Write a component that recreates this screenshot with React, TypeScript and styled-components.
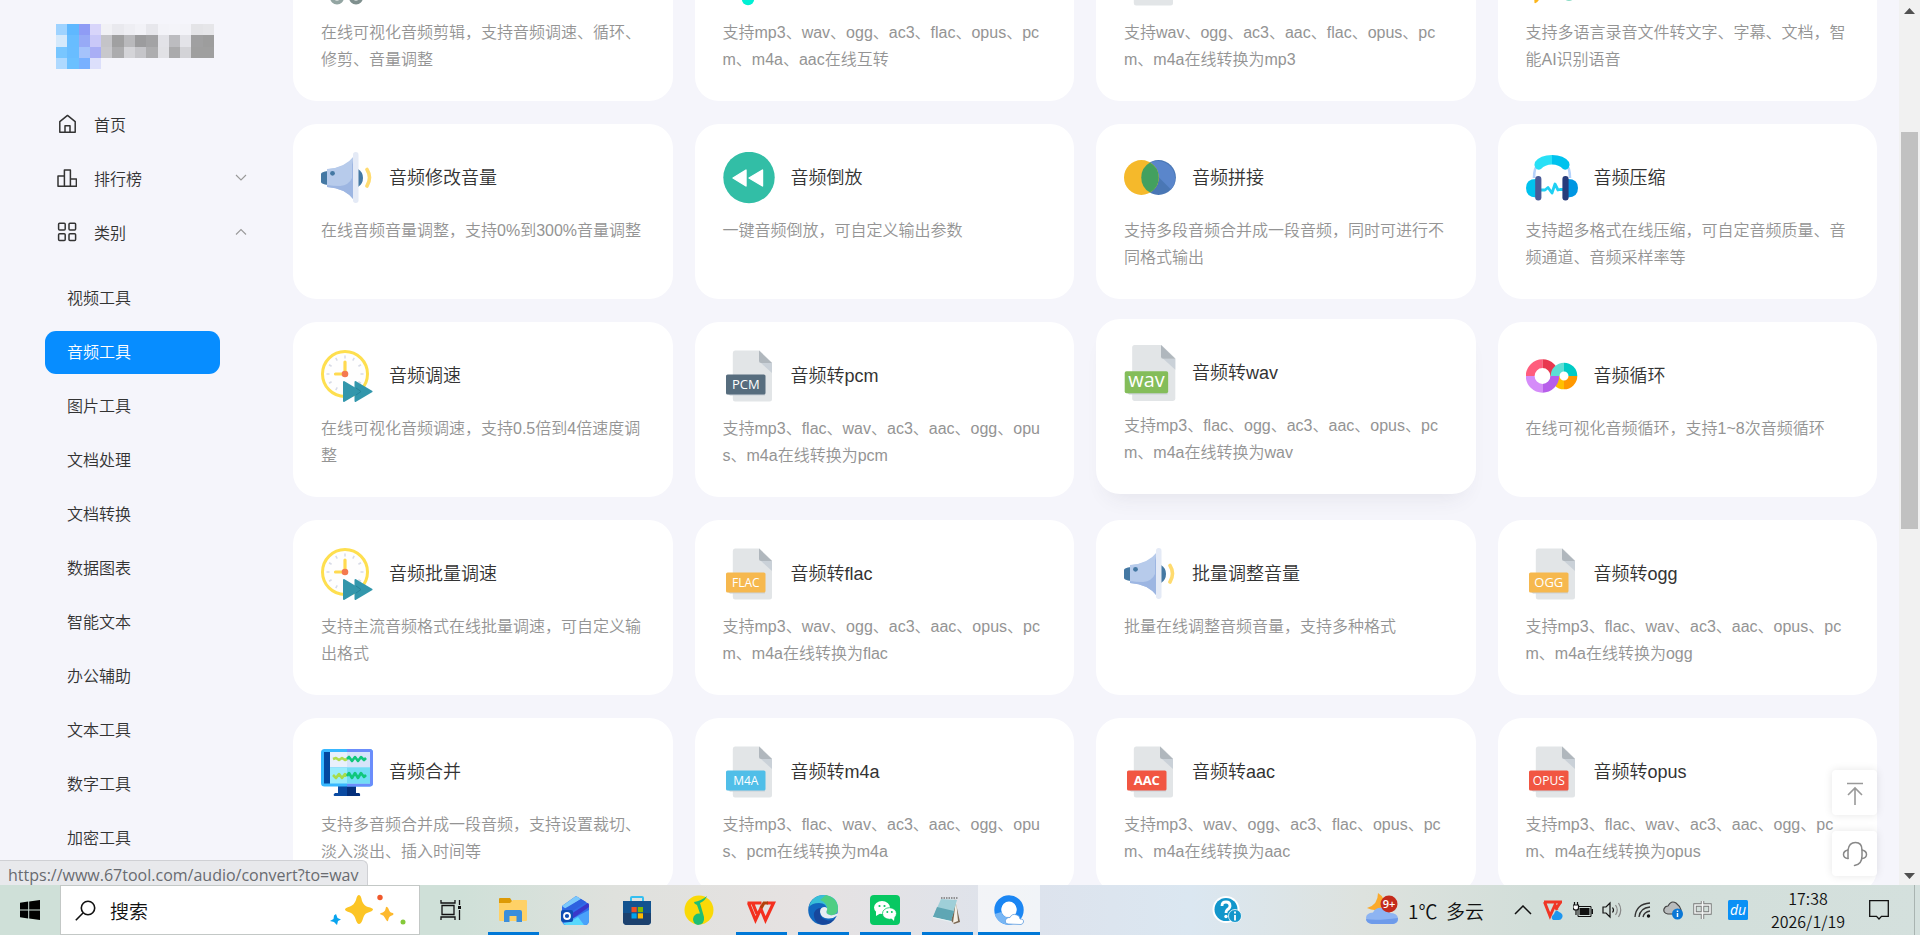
import React from "react";
import styled, { createGlobalStyle, css } from "styled-components";

const GlobalStyle = createGlobalStyle`
  * {
    box-sizing: border-box;
  }

  body {
    margin: 0;
    font-family: "Liberation Sans", "Noto Sans CJK SC", sans-serif;
    font-weight: 350;
    color: #333333;
  }

  button {
    border: 0;
    padding: 0;
    background: none;
    color: inherit;
    font: inherit;
    cursor: pointer;
  }

  a {
    color: inherit;
    text-decoration: none;
  }

  svg {
    display: block;
    flex-shrink: 0;
  }
`;

const Screen = styled("div")`
  height: 100vh;
  display: flex;
  flex-direction: column;
  overflow: hidden;
`;

const Viewport = styled("div")`
  position: relative;
  flex: 1;
  min-height: 0;
  display: flex;
  overflow: hidden;
  background-color: #f5f5fb;
`;

const Sidebar = styled("aside")`
  width: 293px;
  flex-shrink: 0;
  padding: 24px 46px 0 45px;
  overflow: hidden;
`;

const LogoLink = styled("a")`
  display: block;
  height: 73px;
  padding-left: 11px;
`;

const NavButton = styled("button")`
  width: 100%;
  height: 54px;
  padding-left: 12px;
  display: flex;
  align-items: center;
  gap: 17px;
  font-size: 16px;
  text-align: left;

  span {
    flex: 1;
  }
`;

const SubNav = styled("nav")`
  width: 175px;
  margin-top: 18px;
  display: flex;
  flex-direction: column;
  gap: 11px;
`;

const SubNavLink = styled("a")<{ $active?: boolean }>`
  height: 43px;
  flex-shrink: 0;
  padding-left: 22px;
  border-radius: 11px;
  font-size: 16px;
  line-height: 43px;

  ${({ $active }) =>
    $active &&
    css`
      background-color: #078dff;
      color: #ffffff;
    `}
`;

const Content = styled("main")`
  flex: 1;
  min-width: 0;
  margin-top: -74px;
  padding-right: 22px;
`;

const CardGrid = styled("div")`
  display: grid;
  grid-template-columns: repeat(4, 1fr);
  gap: 23px 22px;
`;

const Card = styled("a")<{ $hovered?: boolean }>`
  min-height: 175px;
  padding: 28px;
  border-radius: 24px;
  background-color: #ffffff;

  ${({ $hovered }) =>
    $hovered &&
    css`
      transform: translateY(-3px);
      box-shadow: 0 14px 22px -12px rgba(60, 60, 80, 0.1);

      svg {
        transform: scale(1.1);
      }
    `}
`;

const CardHead = styled("div")`
  display: flex;
  align-items: center;
  gap: 16px;
`;

const CardTitle = styled("h2")`
  margin: 0;
  font-size: 18px;
  line-height: 26px;
  font-weight: 350;
`;

const CardText = styled("p")`
  margin: 13px 0 0;
  color: #949494;
  font-size: 16px;
  line-height: 27px;
  word-break: break-all;
`;

const Scrollbar = styled("div")`
  width: 21px;
  flex-shrink: 0;
  padding: 7px 0 5px;
  display: flex;
  flex-direction: column;
  align-items: center;
  background-color: #f1f1f1;
`;

const ScrollTrack = styled("div")`
  flex: 1;
  width: 17px;
  padding: 117px 0 343px;
`;

const ScrollThumb = styled("div")`
  height: 100%;
  background-color: #c1c1c1;
`;

const FloatTools = styled("div")`
  position: absolute;
  right: 43px;
  bottom: 9px;
  display: flex;
  flex-direction: column;
  gap: 16px;
`;

const FloatButton = styled("button")`
  width: 45px;
  height: 45px;
  display: flex;
  align-items: center;
  justify-content: center;
  border-radius: 4px;
  background-color: #ffffff;
  box-shadow: 0 0 8px rgba(0, 0, 0, 0.1);
`;

const LinkStatus = styled("div")`
  position: absolute;
  left: 0;
  bottom: 0;
  height: 25px;
  padding: 0 9px 0 8px;
  border: 1px solid #cfd0d4;
  border-width: 1px 1px 0 0;
  border-radius: 0 6px 0 0;
  background-color: #e8e9ec;
  color: #686b70;
  font-family: "Open Sans", "Noto Sans", sans-serif;
  font-size: 16px;
  line-height: 28px;
  font-weight: 400;
`;

const Taskbar = styled("footer")`
  height: 50px;
  flex-shrink: 0;
  display: flex;
  align-items: center;
  background: linear-gradient(
    90deg,
    #cfe0d8 0%,
    #cfe0d8 24%,
    #dfe1dd 32%,
    #e6e2e2 42%,
    #dde3ed 54%,
    #dbe7f1 62%,
    #dde2de 71%,
    #d2ded9 80%,
    #d4e0dd 100%
  );
  color: #111111;
  font-family: "Noto Sans CJK SC", sans-serif;
`;

const StartButton = styled("button")`
  width: 60px;
  height: 50px;
  display: flex;
  align-items: center;
  justify-content: center;
`;

const SearchBox = styled("label")`
  width: 360px;
  height: 50px;
  padding: 0 13px 0 14px;
  display: flex;
  align-items: center;
  gap: 14px;
  border: 1px solid #c3c8c6;
  background-color: #ffffff;

  input {
    flex: 1;
    min-width: 0;
    padding: 0;
    border: 0;
    outline: 0;
    background: none;
    font: inherit;
    font-size: 19px;
  }

  input::placeholder {
    color: #111111;
    opacity: 1;
  }
`;

const AppButton = styled("button")<{ $state?: "running" | "focused" }>`
  width: 62px;
  height: 50px;
  display: flex;
  align-items: center;
  justify-content: center;
  position: relative;
  background-color: ${({ $state }) => ($state === "focused" ? "rgba(255, 255, 255, 0.6)" : "transparent")};

  ${({ $state }) =>
    $state &&
    css`
      &::after {
        content: "";
        position: absolute;
        bottom: 0;
        left: ${$state === "focused" ? "0" : "6px"};
        right: ${$state === "focused" ? "0" : "5px"};
        height: 3px;
        background-color: #0078d7;
      }
    `}
`;

const HelpButton = styled("button")`
  margin-left: auto;
  margin-right: 124px;
`;

const Weather = styled("button")`
  display: flex;
  align-items: center;
  gap: 10px;
  font-size: 19px;
`;

const Tray = styled("div")`
  margin-left: 28px;
  margin-right: 15px;
  display: flex;
  align-items: center;
  gap: 9px;

  button {
    width: 21px;
    height: 30px;
    display: flex;
    align-items: center;
    justify-content: center;
  }
`;

const Clock = styled("button")`
  width: 96px;
  margin-left: 12px;
  text-align: center;
  font-size: 16px;
  line-height: 23px;

  span {
    display: block;
  }
`;

const NoticeButton = styled("button")`
  height: 50px;
  padding: 0 25px 0 13px;
  border-right: 1px solid #a9b4b1;
  margin-right: 5px;
`;

/* Sidebar icons */

const mosaic: [number, string[]][] = [
  [0, ["#9fd3ff", "#5fb8ff", "#8f9cf5", "#d8d5fa", "#f1f1f5", "#e9e9ee", "#eeeef3", "#f2f2f7", "#e7e7ec", "#f3f3f8", "#f4f4f9", "#f3f3f8", "#e4e4e7", "#e6e6e9"]],
  [1, ["#d5e9fb", "#68bdff", "#97aaf6", "#c9c8f8", "#c4c4c8", "#a0a0a1", "#b9b9bc", "#9c9c9e", "#a3a3a5", "#e2e2e7", "#bcbcc0", "#e3e3e8", "#a0a0a1", "#9d9d9d"]],
  [2, ["#78c6ff", "#69bdff", "#a5c3fb", "#a9aef5", "#c8c8cc", "#acacae", "#d4d4d8", "#c5c5c9", "#adadaf", "#e1e1e5", "#aaaaac", "#d3d3d7", "#9f9f9f", "#9f9f9f"]],
  [3, ["#aed9ff", "#6bc0ff", "#78b0ff", "#dcdffb"]],
];

const SiteLogo = () => (
  <svg width="158" height="45" viewBox="0 0 14 4" preserveAspectRatio="none" shapeRendering="crispEdges">
    {mosaic.map(([row, cells]) =>
      cells.map((fill, col) => <rect key={`${row}-${col}`} x={col} y={row} width="1" height="1" fill={fill} />)
    )}
  </svg>
);

const lineProps = { fill: "none", stroke: "#333", strokeWidth: 1.5, strokeLinejoin: "round" as const };

const HomeIcon = () => (
  <svg width="20" height="20" viewBox="0 0 20 20" {...lineProps}>
    <path d="M2.8 7.6V18.2H18.2V7.6L10.5 1.4Z" />
    <path d="M8 18V11.8H13V18" />
  </svg>
);

const RankIcon = () => (
  <svg width="20" height="20" viewBox="0 0 20 20" {...lineProps}>
    <path d="M1 18.2V8H7.4V18.2ZM7.4 18.2V2H13.4V18.2ZM13.4 18.2V11H19.4V18.2Z" />
  </svg>
);

const CategoryIcon = () => (
  <svg width="20" height="20" viewBox="0 0 20 20" {...lineProps}>
    <rect x="1.6" y="1.3" width="6.6" height="6.6" rx="1" />
    <rect x="12" y="1.3" width="6.6" height="6.6" rx="1" />
    <rect x="1.6" y="11.8" width="6.6" height="6.6" rx="1" />
    <rect x="12" y="11.8" width="6.6" height="6.6" rx="1" />
  </svg>
);

const Chevron = ({ up }: { up?: boolean }) => (
  <svg width="12" height="8" viewBox="0 0 12 8" fill="none" stroke="#999" strokeWidth="1.1">
    <path d={up ? "M1 6.5L6 1.5L11 6.5" : "M1 1L6 6L11 1"} />
  </svg>
);

/* Tool icons, all drawn on a 52 x 52 board */

const Board = ({ children }: { children: React.ReactNode }) => (
  <svg width="52" height="52" viewBox="0 0 52 52">
    {children}
  </svg>
);

interface FileIconProps {
  label: string;
  color: string;
  size?: number;
  weight?: number;
}

const FileIcon = ({ label, color, size = 12, weight = 400 }: FileIconProps) => (
  <Board>
    <path d="M12 .5H36.5L49 12.5V49Q49 51.5 46.5 51.5H12Q9.8 51.5 9.8 49V3Q9.8 .5 12 .5Z" fill="#e2e5e7" />
    <path d="M38 13L49 23V13Z" fill="#cad1d8" />
    <path d="M36 .5L49 13H38Q36 13 36 11Z" fill="#b0b7bd" />
    <path d="M5 44H42V45.5H7Z" fill="#cad1d8" />
    <rect x="3" y="24.5" width="39.5" height="20" rx="1.6" fill={color} />
    <text
      x="22.8"
      y="39"
      fill="#fff"
      fontFamily="Open Sans, sans-serif"
      fontSize={size}
      fontWeight={weight}
      textAnchor="middle">
      {label}
    </text>
  </Board>
);

const SpeakerIcon = () => (
  <Board>
    <path d="M0 22Q0 20 7 19V33Q0 32 0 30Z" fill="#4478a3" />
    <path d="M37 17Q42 20 42 26T37 35Z" fill="#4478a3" />
    <path d="M6 17Q24 16 33 4V48Q24 36 6 35Z" fill="#b7cbeb" />
    <path d="M33 4V48Q24 36 6 35V33Q22 33 27 26Q30 18 33 4Z" fill="#9db6e2" />
    <path d="M8 17Q22 16 31 8V26Q28 33 19 34Q12 34 6 33V17Z" fill="#b7cbeb" />
    <circle cx="11.5" cy="21.3" r="2.4" fill="#4478a3" />
    <rect x="32" y="0" width="5.5" height="51" rx="2.7" fill="#e4eaf6" />
    <path d="M46 17.5Q51 25.5 46 34" fill="none" stroke="#ffdb6f" strokeWidth="3.6" strokeLinecap="round" />
  </Board>
);

const RewindIcon = () => (
  <Board>
    <circle cx="26" cy="25.5" r="25.7" fill="#32bea6" />
    <path d="M10 26L23 18V34ZM26 26L39.5 18V34Z" fill="#fff" stroke="#fff" strokeWidth="1.4" strokeLinejoin="round" />
  </Board>
);

const JoinIcon = () => (
  <Board>
    <circle cx="34.5" cy="25.5" r="17.4" fill="#4a77b5" />
    <path d="M22.5 13A17.4 17.4 0 0 1 47 37.500Z" fill="#5a86cb" />
    <circle cx="17.4" cy="25.5" r="17.4" fill="#f5b92b" />
    <path d="M26 10.4A17.4 17.4 0 0 1 26 40.6A17.4 17.4 0 0 1 26 10.4Z" fill="#43a05f" />
  </Board>
);

const HeadphoneIcon = () => (
  <Board>
    <path d="M8 26Q8 6 26 6T44 26" fill="none" stroke="#b5d2fb" strokeWidth="2.6" />
    <path d="M9 10Q14 3 26 3V12.5Q19 12.500 15 17Q12 19 9.500 16Q7.500 13 9 10Z" fill="#28e0f6" />
    <path d="M43 10Q38 3 26 3V12.5Q33 12.500 37 17Q40 19 42.500 16Q44.500 13 43 10Z" fill="#00c2ee" />
    <path d="M10 27Q0 27 0 36T10 45.5Z" fill="#00c2ee" />
    <path d="M42 27Q52 27 52 36T42 45.5Z" fill="#0096e2" />
    <path d="M15 38H19L22 35.5L26 41L29 32L32 38L34 37.5H37" fill="none" stroke="#1fd0f3" strokeWidth="2.8" strokeLinejoin="round" />
    <rect x="9.2" y="24" width="6.2" height="24.5" rx="3" fill="#4a5a97" />
    <rect x="36.4" y="24" width="6.2" height="24.5" rx="3" fill="#273b7a" />
  </Board>
);

const ClockIcon = () => (
  <Board>
    <circle cx="24" cy="24" r="22.5" fill="#fefefe" stroke="#fedf4f" strokeWidth="3" />
    {[0, 30, 60, 90, 120, 150, 180, 210, 240, 270, 300, 330].map((angle) => (
      <path key={angle} d="M24 5.5V8.5" stroke="#d8dbe6" strokeWidth="1.5" transform={`rotate(${angle} 24 24)`} />
    ))}
    <path d="M24 12V24H14.5" fill="none" stroke="#ffda50" strokeWidth="3.2" strokeLinecap="round" />
    <circle cx="24" cy="24" r="3.3" fill="#f4794f" />
    <path d="M34.5 32L50.5 41.5L34.5 51Z" fill="#3397ac" stroke="#3397ac" strokeWidth="2" strokeLinejoin="round" />
    <path d="M23 32L39 41.5L23 51Z" fill="#3397ac" stroke="#3397ac" strokeWidth="2" strokeLinejoin="round" />
    <path d="M35 38L40 41.5L35 45" fill="none" stroke="#26849a" strokeWidth="1" />
  </Board>
);

const LoopIcon = () => (
  <Board>
    <g fill="none" strokeWidth="8.8">
      <path d="M38 34.9A8.9 8.9 0 0 1 29.1 26" stroke="#ffbf00" />
      <path d="M38 34.9A8.9 8.9 0 0 0 46.9 26" stroke="#ff9800" />
      <path d="M4.2 26A12.3 12.3 0 0 1 16.5 13.7" stroke="#ff5d7d" />
      <path d="M16.5 13.7A12.3 12.3 0 0 1 28.8 26" stroke="#e8384f" />
      <path d="M29.1 26A8.9 8.9 0 0 1 38 17.1" stroke="#5ddfd5" />
      <path d="M38 17.1A8.9 8.9 0 0 1 46.9 26" stroke="#00cbc5" />
      <path d="M4.2 26A12.3 12.3 0 0 0 16.5 38.3" stroke="#d58cf9" />
      <path d="M16.5 38.3A12.3 12.3 0 0 0 28.8 26" stroke="#b75eea" />
    </g>
  </Board>
);

const MonitorIcon = () => (
  <Board>
    <path d="M17 38H35V47H38Q40 49 38.5 50H13.5Q11.5 49 14 47H17Z" fill="#0a4aa2" />
    <path d="M26 38H35V47H38Q40 49 38.5 50H26Z" fill="#04307c" />
    <rect x="0" y="3" width="52" height="37.5" rx="3.5" fill="#38b8ff" />
    <path d="M26 3H48.5Q52 3 52 6.5V37Q52 40.5 48.5 40.5H26Z" fill="#6b8dfb" />
    <rect x="3" y="6" width="6" height="31.5" fill="#0348a0" />
    <rect x="9" y="6" width="40" height="15.5" fill="#e9f0fb" />
    <rect x="26" y="6" width="23" height="15.5" fill="#d6e4fa" />
    <rect x="9" y="21.5" width="40" height="16" fill="#99ecfc" />
    <rect x="26" y="21.5" width="23" height="16" fill="#72ddf5" />
    <g fill="none" strokeWidth="2.6" strokeLinejoin="round">
      <path d="M12 13L15 12L18 14L21 12L24 14L26 13" stroke="#b0dc4c" />
      <path d="M26 13L28 11L31 15L34 11L37 15L40 11L43 14L45 12" stroke="#10c77b" />
      <path d="M12 29L15 32L18 28L21 32L24 28L26 30" stroke="#a6dc4c" />
      <path d="M26 30L28 27L31 32L34 27L37 32L40 27L43 31L45 29" stroke="#10c77b" />
    </g>
  </Board>
);

const ScissorsIcon = () => (
  <Board>
    <path d="M12 2L32 36M40 2L20 36" stroke="#c8d2d2" strokeWidth="5" />
    <circle cx="16" cy="43.5" r="5" fill="none" stroke="#93a5a2" strokeWidth="4" />
    <circle cx="35" cy="43.5" r="5" fill="none" stroke="#7f908e" strokeWidth="4" />
  </Board>
);

const NoteIcon = () => (
  <Board>
    <path d="M26 4V44M26 4L42 10" fill="none" stroke="#00e9d0" strokeWidth="5" />
    <circle cx="25" cy="45" r="6.2" fill="#00f0d4" />
  </Board>
);

const SpeechIcon = () => (
  <Board>
    <path d="M6 8H22L14 44Q11 50 8.5 49L8 42Z" fill="#fbb51b" />
    <circle cx="43" cy="41" r="6" fill="#8cdcc6" />
  </Board>
);

interface Tool {
  title: string;
  text: string;
  icon: React.ReactNode;
  hovered?: boolean;
}

const tools: Tool[] = [
  { title: "音频剪辑", text: "在线可视化音频剪辑，支持音频调速、循环、修剪、音量调整", icon: <ScissorsIcon /> },
  { title: "音频转换", text: "支持mp3、wav、ogg、ac3、flac、opus、pcm、m4a、aac在线互转", icon: <NoteIcon /> },
  { title: "音频转mp3", text: "支持wav、ogg、ac3、aac、flac、opus、pcm、m4a在线转换为mp3", icon: <FileIcon label="MP3" color="#50bee8" /> },
  { title: "录音转文字", text: "支持多语言录音文件转文字、字幕、文档，智能AI识别语音", icon: <SpeechIcon /> },
  { title: "音频修改音量", text: "在线音频音量调整，支持0%到300%音量调整", icon: <SpeakerIcon /> },
  { title: "音频倒放", text: "一键音频倒放，可自定义输出参数", icon: <RewindIcon /> },
  { title: "音频拼接", text: "支持多段音频合并成一段音频，同时可进行不同格式输出", icon: <JoinIcon /> },
  { title: "音频压缩", text: "支持超多格式在线压缩，可自定音频质量、音频通道、音频采样率等", icon: <HeadphoneIcon /> },
  { title: "音频调速", text: "在线可视化音频调速，支持0.5倍到4倍速度调整", icon: <ClockIcon /> },
  { title: "音频转pcm", text: "支持mp3、flac、wav、ac3、aac、ogg、opus、m4a在线转换为pcm", icon: <FileIcon label="PCM" color="#576d7e" size={13} /> },
  {
    title: "音频转wav",
    text: "支持mp3、flac、ogg、ac3、aac、opus、pcm、m4a在线转换为wav",
    icon: <FileIcon label="wav" color="#84bd5a" size={18} />,
    hovered: true,
  },
  { title: "音频循环", text: "在线可视化音频循环，支持1~8次音频循环", icon: <LoopIcon /> },
  { title: "音频批量调速", text: "支持主流音频格式在线批量调速，可自定义输出格式", icon: <ClockIcon /> },
  { title: "音频转flac", text: "支持mp3、wav、ogg、ac3、aac、opus、pcm、m4a在线转换为flac", icon: <FileIcon label="FLAC" color="#f6b84e" /> },
  { title: "批量调整音量", text: "批量在线调整音频音量，支持多种格式", icon: <SpeakerIcon /> },
  { title: "音频转ogg", text: "支持mp3、flac、wav、ac3、aac、opus、pcm、m4a在线转换为ogg", icon: <FileIcon label="OGG" color="#f6b84e" size={13} /> },
  { title: "音频合并", text: "支持多音频合并成一段音频，支持设置裁切、淡入淡出、插入时间等", icon: <MonitorIcon /> },
  { title: "音频转m4a", text: "支持mp3、flac、wav、ac3、aac、ogg、opus、pcm在线转换为m4a", icon: <FileIcon label="M4A" color="#50bee8" /> },
  { title: "音频转aac", text: "支持mp3、wav、ogg、ac3、flac、opus、pcm、m4a在线转换为aac", icon: <FileIcon label="AAC" color="#f15642" size={13} weight={700} /> },
  { title: "音频转opus", text: "支持mp3、flac、wav、ac3、aac、ogg、pcm、m4a在线转换为opus", icon: <FileIcon label="OPUS" color="#f15642" /> },
];

const categories = [
  "视频工具",
  "音频工具",
  "图片工具",
  "文档处理",
  "文档转换",
  "数据图表",
  "智能文本",
  "办公辅助",
  "文本工具",
  "数字工具",
  "加密工具",
];

/* Taskbar icons, 30 x 30 */

const AppIcon = ({ children }: { children: React.ReactNode }) => (
  <svg width="30" height="30" viewBox="0 0 30 30">
    {children}
  </svg>
);

const taskbarApps: { name: string; state?: "running" | "focused"; icon: React.ReactNode }[] = [
  {
    name: "文件资源管理器",
    state: "running",
    icon: (
      <AppIcon>
        <path d="M1 4Q1 3 2 3H12L14 6V9H1Z" fill="#dd9a06" />
        <path d="M1 8H12L15 5H28Q29 5 29 6V25Q29 26 28 26H2Q1 26 1 25Z" fill="#ffd166" />
        <path d="M6 27V17Q6 15 8 15H22Q24 15 24 17V27H18.5V21H11.5V27Z" fill="#3b8edb" />
      </AppIcon>
    ),
  },
  {
    name: "Outlook",
    icon: (
      <AppIcon>
        <path d="M2 11L16 1L29 9V25Q29 30 25 30H6Q2 30 2 25Z" fill="#2f6be8" />
        <path d="M2 11L16 1L21 4L6 14Z" fill="#7cc9fb" />
        <path d="M4 14L21 4L26 7L8 19Z" fill="#2d62e0" />
        <path d="M8 21L28 8Q29 9 29 12L12 24Z" fill="#3a37c9" />
        <path d="M12 24L29 15V25Q29 30 25 30H15Z" fill="#4aa2fa" />
        <path d="M10 27L18 22L24 30H6Q4 30 3 28Z" fill="#58d8fd" />
        <rect x="1" y="15" width="12" height="12" rx="2" fill="#0f4fb4" />
        <circle cx="7" cy="21" r="3" fill="none" stroke="#fff" strokeWidth="1.8" />
      </AppIcon>
    ),
  },
  {
    name: "Microsoft Store",
    icon: (
      <AppIcon>
        <path d="M9 7V3Q9 2 10 2H20Q21 2 21 3V7" fill="none" stroke="#35bff0" strokeWidth="2" />
        <path d="M1 6H29V26Q29 30 25 30H5Q1 30 1 26Z" fill="#125390" />
        <path d="M1 18H29V26Q29 30 25 30H5Q1 30 1 26Z" fill="#1c416e" />
        <rect x="9.5" y="12" width="5.2" height="5.2" fill="#f25022" />
        <rect x="15.8" y="12" width="5.2" height="5.2" fill="#7fba00" />
        <rect x="9.5" y="18.3" width="5.2" height="5.2" fill="#00a4ef" />
        <rect x="15.8" y="18.3" width="5.2" height="5.2" fill="#ffb900" />
      </AppIcon>
    ),
  },
  {
    name: "QQ音乐",
    icon: (
      <AppIcon>
        <circle cx="15" cy="15" r="14.5" fill="#fad907" />
        <path d="M10 7Q17 6 23 1Q21 6 16 8L20 22Q21 29 14 30Q9 29 9 24Q10 18 16 18.5L13 10Q10 9 10 7Z" fill="#1ebe74" />
      </AppIcon>
    ),
  },
  {
    name: "WPS Office",
    state: "running",
    icon: (
      <AppIcon>
        <path d="M1.5 8H15.5M2.5 8L9.5 25L16 11M7 9L11 19M14.500 13L19.5 25L27.500 8H21" fill="none" stroke="#f4301f" strokeWidth="3.2" />
        <path d="M15 13L18 8H22" fill="none" stroke="#b3410b" strokeWidth="3.2" />
      </AppIcon>
    ),
  },
  {
    name: "Microsoft Edge",
    state: "running",
    icon: (
      <AppIcon>
        <circle cx="15" cy="15" r="14.8" fill="#1268bf" />
        <path d="M1 12Q4 0 16 0Q30 1 30 14Q29 21 22 20Q17 19 19 15Q19 8 11 8Q4 8 1 12Z" fill="#38bfd7" />
        <path d="M18 0Q30 3 30 14Q29 21 22 20Q17 19 19 15Q20 8 12 5Z" fill="#4fce83" />
        <path d="M13 13Q9 23 20 25.5Q25 26 28 22Q23 31 13 29.5Q5 27 6 18Q8 13 13 13Z" fill="#17479c" />
        <path d="M17 12Q12 12 12 17Q13 23 20 23.5Q25 24 30 20Q30 18 29 18.500Q25 21 22 20Q17 19 19 15Q20 13 17 12Z" fill="#e8edf2" />
      </AppIcon>
    ),
  },
  {
    name: "微信",
    state: "running",
    icon: (
      <AppIcon>
        <rect width="30" height="30" rx="4" fill="#07c862" />
        <ellipse cx="12" cy="12.5" rx="8" ry="6.5" fill="#fff" />
        <path d="M6 16L6 21L11 18Z" fill="#fff" />
        <ellipse cx="19.5" cy="18.5" rx="7" ry="5.8" fill="#fff" stroke="#07c862" strokeWidth=".8" />
        <path d="M21 23L24 26L24.5 22Z" fill="#fff" />
        <g fill="#07c862">
          <circle cx="9.5" cy="11" r="1.1" />
          <circle cx="14.5" cy="11" r="1.1" />
          <circle cx="17.3" cy="17" r="1" />
          <circle cx="21.8" cy="17" r="1" />
        </g>
      </AppIcon>
    ),
  },
  {
    name: "记事本",
    state: "running",
    icon: (
      <AppIcon>
        <path d="M23 4L28 27L22 29L18 24Z" fill="#7a6650" />
        <path d="M24 5L26 26L21 28Z" fill="#f6f1e6" />
        <path d="M9 4L25 5L19 26L1 22Z" fill="#9fcfd8" />
        <path d="M5 12L22 16L19 26L1 22Z" fill="#5fa6b4" />
        <path d="M1 22L19 26V27L1 23Z" fill="#e9f3f4" />
        <path d="M9 3H26" stroke="#777" strokeWidth="1.5" strokeDasharray="1.5 1" />
      </AppIcon>
    ),
  },
  {
    name: "QQ浏览器",
    state: "focused",
    icon: (
      <AppIcon>
        <circle cx="15" cy="15" r="11.2" fill="none" stroke="#1b86f3" strokeWidth="7" />
        <path d="M4 18A11.2 11.2 0 0 0 17 26" fill="none" stroke="#78b6f4" strokeWidth="7" />
        <circle cx="15" cy="14" r="7.5" fill="#fff" />
        <path d="M14 29Q10 28 12 24Q14 22 16 22.5Q18 18 23 20Q26 21 26 24Q30 24 29.5 27Q29 29 27 29.5Z" fill="#fff" stroke="#5f9de0" strokeWidth=".8" />
      </AppIcon>
    ),
  },
];

const App: React.FC = () => {
  return (
    <>
      <GlobalStyle />
      <Screen>
        <Viewport>
          <Sidebar>
            <LogoLink href="#" aria-label="首页">
              <SiteLogo />
            </LogoLink>
            <NavButton type="button">
              <HomeIcon />
              <span>首页</span>
            </NavButton>
            <NavButton type="button">
              <RankIcon />
              <span>排行榜</span>
              <Chevron />
            </NavButton>
            <NavButton type="button" aria-expanded="true">
              <CategoryIcon />
              <span>类别</span>
              <Chevron up />
            </NavButton>
            <SubNav>
              {categories.map((name) => (
                <SubNavLink key={name} href="#" $active={name === "音频工具"}>
                  {name}
                </SubNavLink>
              ))}
            </SubNav>
          </Sidebar>

          <Content>
            <CardGrid>
              {tools.map((tool) => (
                <Card key={tool.title} href="#" $hovered={tool.hovered}>
                  <CardHead>
                    {tool.icon}
                    <CardTitle>{tool.title}</CardTitle>
                  </CardHead>
                  <CardText>{tool.text}</CardText>
                </Card>
              ))}
            </CardGrid>
          </Content>

          <Scrollbar aria-hidden="true">
            <svg width="11" height="8" viewBox="0 0 11 8">
              <path d="M0 7H11L5.5 1Z" fill="#505050" />
            </svg>
            <ScrollTrack>
              <ScrollThumb />
            </ScrollTrack>
            <svg width="11" height="8" viewBox="0 0 11 8">
              <path d="M0 1H11L5.5 7Z" fill="#505050" />
            </svg>
          </Scrollbar>

          <FloatTools>
            <FloatButton type="button" aria-label="回到顶部">
              <svg width="24" height="24" viewBox="0 0 24 24" fill="none" stroke="#999" strokeWidth="1.6">
                <path d="M4 2.5H20M12 24V7M5 14L12 7L19 14" />
              </svg>
            </FloatButton>
            <FloatButton type="button" aria-label="在线客服">
              <svg width="26" height="26" viewBox="0 0 26 26" fill="none" stroke="#888" strokeWidth="1.5" strokeLinecap="round">
                <path d="M6 17.5V9Q7 1.5 13.5 1.5T20 9V15Q20 23.5 12.5 24.5" />
                <path d="M6 9Q1.5 10 1.5 13.5T6 17.5M20 9Q24.5 10 24.5 13.5T20 17.5" />
              </svg>
            </FloatButton>
          </FloatTools>

          <LinkStatus>https://www.67tool.com/audio/convert?to=wav</LinkStatus>
        </Viewport>

        <Taskbar>
          <StartButton type="button" aria-label="开始">
            <svg width="20" height="20" viewBox="0 0 20 20">
              <path d="M0 2.8L8.2 1.6V9.5H0ZM9.2 1.5L20 0V9.5H9.2ZM0 10.5H8.2V18.4L0 17.2ZM9.2 10.5H20V20L9.2 18.5Z" />
            </svg>
          </StartButton>
          <SearchBox>
            <svg width="21" height="21" viewBox="0 0 21 21" fill="none" stroke="#111" strokeWidth="1.6">
              <circle cx="13" cy="8" r="6.7" />
              <path d="M8 13L.8 20.3" />
            </svg>
            <input type="text" placeholder="搜索" aria-label="搜索" />
            <svg width="78" height="32" viewBox="0 0 78 32">
              <path d="M31 1Q33 1 34 7Q36 12 40 13Q45 14 45 15.500T39 19Q36 20 34.5 26Q33 30 31 30T27.5 25Q26 20 22 18.5Q17 17 17 15.5T22 12.5Q26 11 28 6Q29 1 31 1Z" fill="#fcc525" />
              <path d="M59 13Q60 13 61 16T65 19Q66 20 65 21Q61 22 60.5 25T59 27T57 24Q56 21 53 20.5Q51 20 53 19Q57 18 57.5 15T59 13Z" fill="#fdb92e" />
              <path d="M8 20L9.5 24L13 25.5L10 27L9 31L6 28L2 27L5.5 25L6 21.5Z" fill="#08a4ee" />
              <circle cx="52" cy="3.5" r="2.7" fill="#f0582b" />
              <circle cx="75" cy="28" r="2.5" fill="#85c93a" />
            </svg>
          </SearchBox>
          <AppButton type="button" aria-label="任务视图">
            <svg width="22" height="20" viewBox="0 0 22 20" fill="none" stroke="#111" strokeWidth="1.3">
              <path d="M2 5.5H14V14.5H2ZM1 0V3H15V0M1 20V17H15V20M19.5 0V5M19.500 10V20" />
              <rect x="18" y="6" width="3" height="3" fill="#111" stroke="none" />
            </svg>
          </AppButton>
          {taskbarApps.map((app) => (
            <AppButton key={app.name} type="button" aria-label={app.name} $state={app.state}>
              {app.icon}
            </AppButton>
          ))}

          <HelpButton type="button" aria-label="帮助">
            <svg width="30" height="28" viewBox="0 0 30 28">
              <circle cx="14" cy="13.5" r="13.5" fill="#fff" />
              <circle cx="14" cy="13.5" r="11.5" fill="#1296cb" />
              <path d="M10 10Q10 6 14 6T18 10Q18 12 15 14Q14 15 14 17" fill="none" stroke="#fff" strokeWidth="2.8" />
              <circle cx="14" cy="20.5" r="1.7" fill="#fff" />
              <circle cx="23" cy="20" r="6.5" fill="#1296cb" stroke="#fff" strokeWidth=".8" />
              <path d="M23 15.5V17.5M23 19V24.5" stroke="#fff" strokeWidth="1.8" />
            </svg>
          </HelpButton>
          <Weather type="button">
            <svg width="32" height="42" viewBox="0 0 32 42">
              <path d="M12 4Q20 9 17 17Q11 24 1 19Q12 16 12 4Z" fill="#fbaa2c" />
              <path d="M6 35Q0 34 0 29T7 23.5Q10 18 16 19T24 24Q31 24 32 29T27 35Z" fill="#8db4f2" />
              <path d="M6 35Q0 34 0 30Q10 32 32 29Q32 34 27 35Z" fill="#6e9bea" />
              <circle cx="23" cy="15" r="8.5" fill="#c42b1c" />
              <text x="23" y="19" fill="#fff" fontSize="11" fontWeight="600" fontFamily="Open Sans, sans-serif" textAnchor="middle">
                9+
              </text>
            </svg>
            <span>1℃&nbsp; 多云</span>
          </Weather>
          <Tray>
            <button type="button" aria-label="显示隐藏的图标">
              <svg width="18" height="10" viewBox="0 0 18 10" fill="none" stroke="#111" strokeWidth="1.5">
                <path d="M1 9L9 1L17 9" />
              </svg>
            </button>
            <button type="button" aria-label="WPS云">
              <svg width="20" height="20" viewBox="0 0 20 20">
                <path d="M1 2H19M1.5 2L7 16L12 5L14 10M13 9L17 3" fill="none" stroke="#f03626" strokeWidth="3" />
                <path d="M10 20Q7 17 11 14Q13 8 16 12Q21 14 19 18Q18 20 16 20Z" fill="#1d96f0" />
              </svg>
            </button>
            <button type="button" aria-label="电池">
              <svg width="20" height="16" viewBox="0 0 20 16">
                <path d="M5 4.500H18V14.500H5Z" fill="none" stroke="#111" />
                <path d="M6.500 6H16.500V13H6.500Z" fill="#111" />
                <path d="M18.5 7H20V12H18.5Z" fill="#111" />
                <path d="M0 3H5.500V6Q5.500 8 3 8T0 6ZM1.500 0V3M4.500 0V3M3 8V13" fill="#fff" stroke="#111" strokeWidth="1.200" />
              </svg>
            </button>
            <button type="button" aria-label="音量">
              <svg width="21" height="18" viewBox="0 0 21 18" fill="none" stroke="#111" strokeWidth="1.2">
                <path d="M1 6H4L8 2V16L4 12H1ZM10.5 6.5Q12.5 9 10.5 11.5" />
                <path d="M13.5 4Q17 9 13.5 14M16.5 2Q21 9 16.5 16" stroke="#888" />
              </svg>
            </button>
            <button type="button" aria-label="网络">
              <svg width="18" height="18" viewBox="0 0 18 18" fill="none" stroke="#333" strokeWidth="1.3">
                <path d="M1 16Q2 3 16 2M5 16Q6 7 16 6M9 16Q10 11 16 10" />
                <circle cx="14.5" cy="15" r="1.7" fill="#111" stroke="none" />
              </svg>
            </button>
            <button type="button" aria-label="云同步">
              <svg width="20" height="20" viewBox="0 0 20 20">
                <path d="M5 14Q0 13 1 9Q2 6 5 6Q8 0 13 3Q17 6 18 10V14Z" fill="#b9bcbd" stroke="#444" strokeWidth="1.2" />
                <circle cx="14.5" cy="14" r="5.5" fill="#0b78d6" />
                <path d="M14.5 10.5V12M14.5 13V17" stroke="#fff" strokeWidth="1.5" />
              </svg>
            </button>
            <button type="button" aria-label="输入法">
              <svg width="19" height="20" viewBox="0 0 19 20" fill="none">
                <path d="M2 5H17V13H2ZM9.5 1V19" stroke="#777" strokeWidth="3.4" />
                <path d="M2 5H17V13H2ZM9.5 1V19" stroke="#f3f6f5" strokeWidth="1.6" />
              </svg>
            </button>
          </Tray>
          <svg width="20" height="20" viewBox="0 0 20 20" role="img" aria-label="百度输入法">
            <rect width="20" height="20" rx="1.5" fill="#0a90f5" />
            <text x="10" y="15" fill="#fff" fontSize="14" fontStyle="italic" fontWeight="400" fontFamily="Open Sans, sans-serif" textAnchor="middle">
              du
            </text>
          </svg>
          <Clock type="button">
            <span>17:38</span>
            <span>2026/1/19</span>
          </Clock>
          <NoticeButton type="button" aria-label="通知">
            <svg width="20" height="20" viewBox="0 0 20 20" fill="none" stroke="#111" strokeWidth="1.3">
              <path d="M.7 .7H19.3V16.3H12.5L10 19L7.5 16.3H.7Z" />
            </svg>
          </NoticeButton>
        </Taskbar>
      </Screen>
    </>
  );
};

export default App;
